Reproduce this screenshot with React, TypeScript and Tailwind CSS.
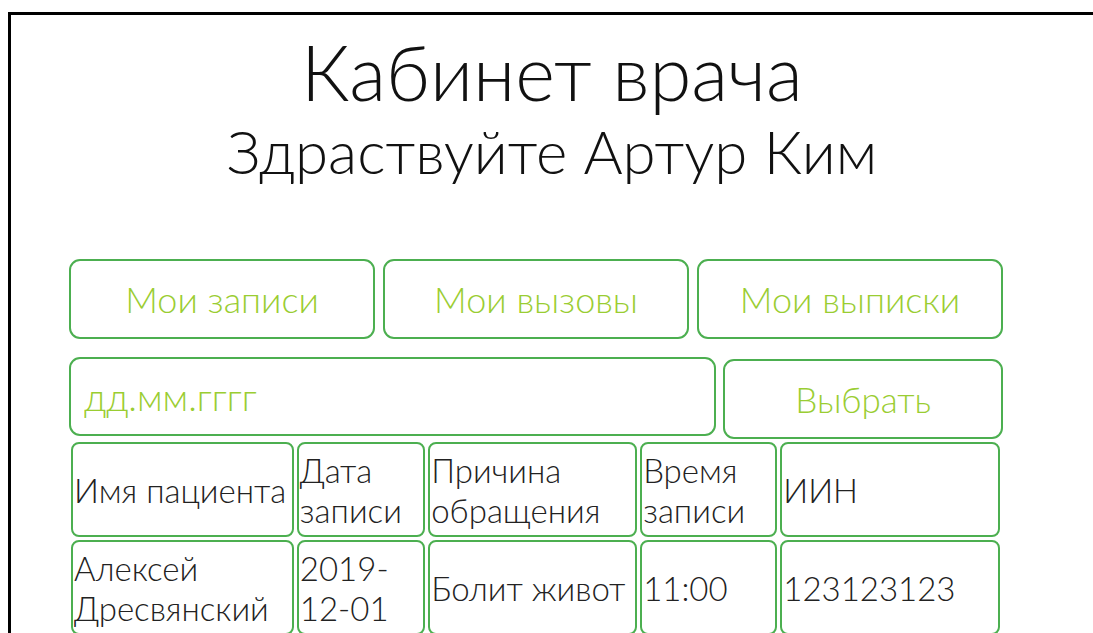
import React from 'react';

const headers = ['Имя пациента', 'Дата записи', 'Причина обращения', 'Время записи', 'ИИН'];
const rows = [['Алексей Дресвянский', '2019-12-01', 'Болит живот', '11:00', '123123123']];
const colWidths = ['w-[223px]', 'w-[129px]', 'w-[210px]', 'w-[138px]', 'w-[221px]'];

const font = { fontFamily: 'Lato, "Open Sans", sans-serif' };

export default function App() {
  return (
    <div className="h-[633px] overflow-hidden bg-white pt-[12px] pl-[8px]" style={font}>
      <div className="min-h-[700px] border-l-[3px] border-t-[3px] border-black">
        <h1 className="mt-[14px] text-center text-[76px] font-light leading-[86px] text-[#111]">Кабинет врача</h1>
        <h2 className="text-center text-[60px] font-light leading-[72px] text-[#111]">Здраствуйте Артур Ким</h2>

        <div className="ml-[58px] mt-[72px] w-[934px]">
          <div className="grid grid-cols-3 gap-[8px]">
            {['Мои записи', 'Мои вызовы', 'Мои выписки'].map((t) => (
              <button
                key={t}
                className="h-[80px] rounded-[11px] border-2 border-[#4caf50] bg-white text-[36px] font-light text-[#9acd32]"
              >
                {t}
              </button>
            ))}
          </div>

          <div className="mt-[17px] flex items-start gap-[7px]">
            <input
              type="text"
              placeholder="дд.мм.гггг"
              className="mt-[1px] h-[79px] w-[648px] rounded-[11px] border-2 border-[#4caf50] px-[13px] text-[37px] font-light placeholder:text-[#9acd32] focus:outline-none"
            />
            <button className="mt-[3px] h-[80px] w-[280px] rounded-[11px] border-2 border-[#4caf50] bg-white text-[35px] font-light text-[#9acd32]">
              Выбрать
            </button>
          </div>

          <table className="-ml-[1px] border-separate border-spacing-[3px] text-[33px] font-light text-[#222]">
            <thead>
              <tr>
                {headers.map((h, i) => (
                  <th
                    key={h}
                    className={`${colWidths[i]} ${i === 0 ? 'whitespace-nowrap' : ''} h-[95px] rounded-[8px] border-2 border-[#4caf50] px-[1px] text-left align-middle font-light leading-[40px]`}
                  >
                    {h}
                  </th>
                ))}
              </tr>
            </thead>
            <tbody>
              {rows.map((r) => (
                <tr key={r[0]}>
                  {r.map((c, i) => (
                    <td
                      key={i}
                      className={`${colWidths[i]} h-[95px] rounded-[8px] border-2 border-[#4caf50] px-[1px] align-middle leading-[40px]`}
                    >
                      {c}
                    </td>
                  ))}
                </tr>
              ))}
            </tbody>
          </table>
        </div>
      </div>
    </div>
  );
}
